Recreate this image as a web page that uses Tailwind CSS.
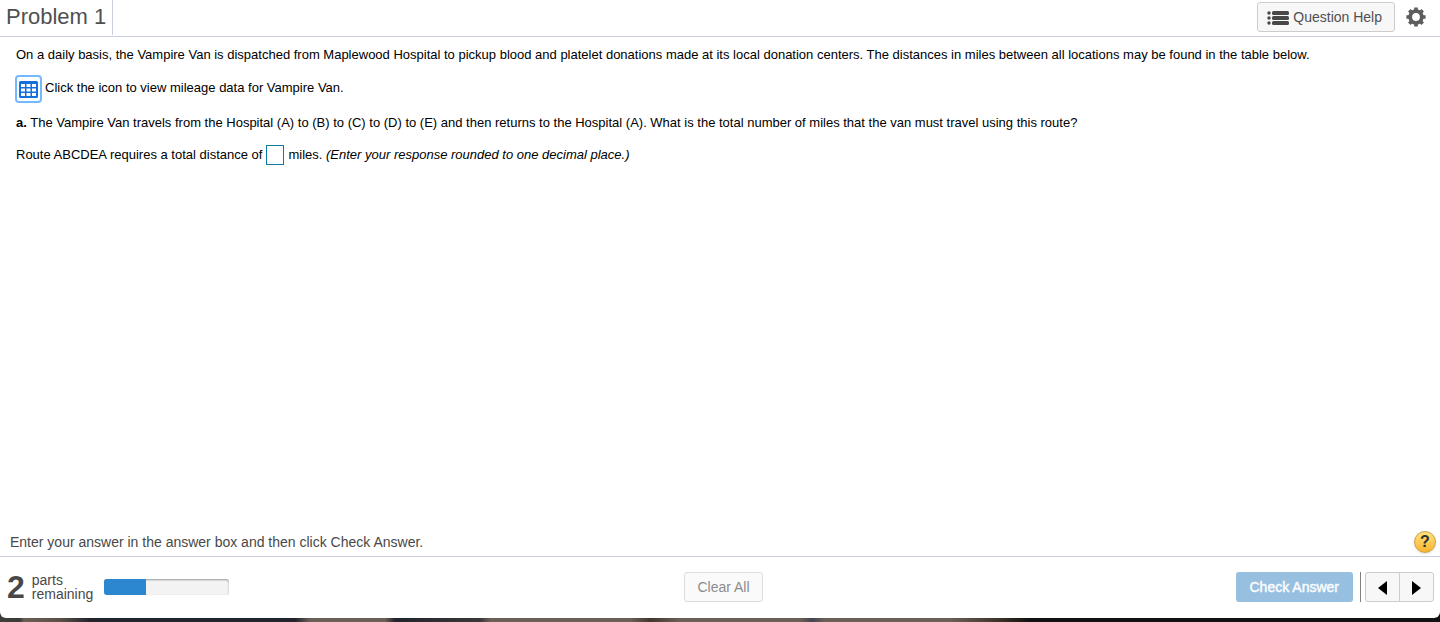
<!DOCTYPE html>
<html lang="en">
<head>
  <meta charset="utf-8" />
  <meta name="viewport" content="width=device-width, initial-scale=1" />
  <title>Problem 1</title>
  <script src="https://cdn.jsdelivr.net/npm/@tailwindcss/browser@4"></script>
</head>
<body class="min-h-screen flex flex-col font-['Liberation_Sans',Arial,sans-serif] bg-[linear-gradient(to_right,#3c3c38_0,#3c3c38_20px,#6a5f55_24px,#5a5048_60px,#23242c_90px,#23242c_295px,#6b6058_310px,#6b6058_385px,#23242c_395px,#3a3738_480px,#6b6058_490px,#6b6058_630px,#433830_650px,#6b6058_680px,#6b6058_800px,#454550_812px,#6b6058_825px,#6b6058_950px,#3b3127_1000px,#111111_1030px,#111111_100%)]">
  <div class="flex-1 flex flex-col bg-white rounded-b-md mb-1">
    <header class="flex items-center justify-between h-[37px] border-b border-[#c8cde0]">
      <h1 class="self-start h-[35px] px-1.5 border-r border-[#c8cde0] text-[22px] leading-[34px] text-[#505050]">Problem 1</h1>
      <div class="flex items-center gap-[11px] pr-3.5 pb-0.5">
        <button type="button" class="flex items-center gap-1 h-[30px] px-[9px] border border-[#cccccc] rounded-[3px] bg-[#f7f7f7] text-sm text-[#505050]">
          <svg class="w-[22px] h-4 mt-0.5" viewBox="0 0 22 16" fill="#484848" aria-hidden="true">
            <circle cx="2" cy="3" r="1.7" />
            <circle cx="2" cy="8" r="1.7" />
            <circle cx="2" cy="13" r="1.7" />
            <rect x="5" y="1" width="17" height="4" rx="1.5" />
            <rect x="5" y="6" width="17" height="4" rx="1.5" />
            <rect x="5" y="11" width="17" height="4" rx="1.5" />
          </svg>
          <span class="pr-[3px]">Question Help</span>
        </button>
        <button type="button" aria-label="Settings">
          <svg class="w-5 h-5" viewBox="0 0 20 20" fill="none" aria-hidden="true">
            <circle cx="10" cy="10" r="5.8" stroke="#5c5c5c" stroke-width="3.8" />
            <g stroke="#5c5c5c" stroke-width="3.6">
              <path d="M10 .4v3.2M10 16.4v3.2M.4 10h3.2M16.4 10h3.2" />
              <path d="M3.3 3.3l2.2 2.2M14.5 14.5l2.2 2.2M3.3 16.7l2.2-2.2M14.5 5.5l2.2-2.2" />
            </g>
          </svg>
        </button>
      </div>
    </header>

    <main class="flex-1 px-4 pt-2 text-[13px] leading-5 text-black">
      <p>On a daily basis, the Vampire Van is dispatched from Maplewood Hospital to pickup blood and platelet donations made at its local donation centers. The distances in miles between all locations may be found in the table below.</p>
      <p class="flex items-center gap-[3px] mt-2.5 -ml-px">
        <button type="button" aria-label="Mileage data" class="flex items-center justify-center w-[27px] h-7 border-2 border-[#73b9ff] rounded-[4px]">
          <svg class="w-[19px] h-[17px]" viewBox="0 0 19 17" aria-hidden="true">
            <rect width="19" height="17" rx="1.5" fill="#1470dc" />
            <g fill="#ffffff">
              <rect x="2" y="3" width="4" height="3" />
              <rect x="7.5" y="3" width="4" height="3" />
              <rect x="13" y="3" width="4" height="3" />
              <rect x="2" y="7.5" width="4" height="3" />
              <rect x="7.5" y="7.5" width="4" height="3" />
              <rect x="13" y="7.5" width="4" height="3" />
              <rect x="2" y="12" width="4" height="3" />
              <rect x="7.5" y="12" width="4" height="3" />
              <rect x="13" y="12" width="4" height="3" />
            </g>
          </svg>
        </button>
        <span class="pb-0.5">Click the icon to view mileage data for Vampire Van.</span>
      </p>
      <p class="mt-2.5"><b>a.</b> The Vampire Van travels from the Hospital (A) to (B) to (C) to (D) to (E) and then returns to the Hospital (A). What is the total number of miles that the van must travel using this route?</p>
      <p class="flex items-center gap-1 mt-3">
        <label for="distance">Route ABCDEA requires a total distance of</label>
        <input id="distance" type="text" class="w-[18px] h-5 border border-[#0c7aa5] bg-white text-center" />
        <span>miles. <i>(Enter your response rounded to one decimal place.)</i></span>
      </p>
    </main>

    <div class="flex items-center justify-between h-7 pl-2.5 pr-1 text-sm text-[#484848]">
      <p>Enter your answer in the answer box and then click Check Answer.</p>
      <button type="button" aria-label="Help" class="w-[22px] h-[22px] border border-[#c9a04a] rounded-full bg-linear-to-b from-[#ffe27a] to-[#fbb428] text-base leading-5 font-bold text-[#303030] shadow-sm">?</button>
    </div>

    <footer class="grid grid-cols-3 items-center h-[62px] pl-[7px] pr-1.5 pb-0.5 border-t border-[#c8cde0] text-sm">
      <div class="flex items-center gap-[7px] text-[#484848]">
        <span class="text-[32px] leading-8 font-bold">2</span>
        <span class="leading-3.5">parts<br />remaining</span>
        <div role="progressbar" aria-label="Parts completed" aria-valuenow="1" aria-valuemin="0" aria-valuemax="3" class="w-[125px] h-4 ml-1 rounded-[3px] overflow-hidden bg-[#f3f3f3] shadow-[inset_0_1px_2px_#999999]">
          <div class="h-full bg-[#2d87d0]" style="width: 33.3%"></div>
        </div>
      </div>
      <div class="flex justify-center pl-1.5">
        <button type="button" disabled class="h-[30px] px-3 border border-[#dddddd] rounded-[3px] bg-[#fafafa] text-[#8c8c8c]">Clear All</button>
      </div>
      <div class="flex items-center justify-end">
        <button type="button" class="h-[30px] px-3.5 rounded-[3px] bg-[#97bfdf] text-[#f8fbfd] [-webkit-text-stroke:0.5px_#f8fbfd]">Check Answer</button>
        <div class="w-px h-[30px] ml-[7px] mr-1 bg-[#808080]"></div>
        <div class="flex h-[30px] border border-[#cccccc] rounded-[3px] bg-[#f7f7f7]">
          <button type="button" aria-label="Previous" class="flex items-center justify-center w-[34px] border-r border-[#cccccc]">
            <svg class="w-[9px] h-3.5 mt-0.5" viewBox="0 0 9 14" aria-hidden="true"><path d="M9 0v14L0 7z" /></svg>
          </button>
          <button type="button" aria-label="Next" class="flex items-center justify-center w-[33px]">
            <svg class="w-[9px] h-3.5 mt-0.5" viewBox="0 0 9 14" aria-hidden="true"><path d="M0 0v14l9-7z" /></svg>
          </button>
        </div>
      </div>
    </footer>
  </div>
</body>
</html>
